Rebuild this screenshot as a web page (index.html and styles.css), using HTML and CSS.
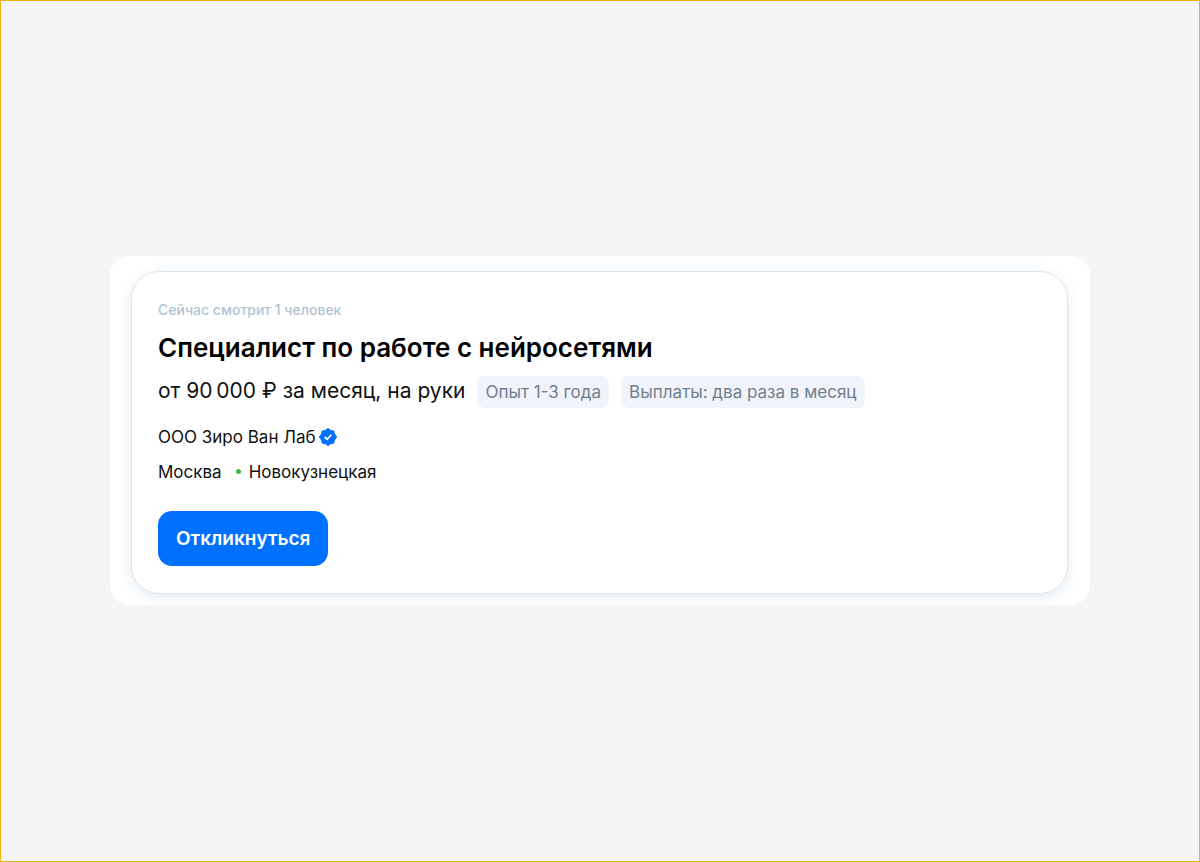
FILE: index.html
```html
<!DOCTYPE html>
<html lang="ru">
<head>
    <meta charset="UTF-8">
    <meta name="viewport" content="width=device-width, initial-scale=1.0">
    <title>Специалист по работе с нейросетями</title>
    <link rel="stylesheet" href="styles.css">
</head>
<body>
    <main class="panel">
        <article class="vacancy">
            <p class="viewers">Сейчас смотрит 1 человек</p>
            <h2 class="title">Специалист по работе с нейросетями</h2>

            <div class="conditions">
                <span class="salary">от 90&#8239;000 ₽ за месяц, на руки</span>
                <span class="tag">Опыт 1-3 года</span>
                <span class="tag">Выплаты: два раза в месяц</span>
            </div>

            <div class="company">
                <span>ООО Зиро Ван Лаб</span>
                <svg class="verified" viewBox="0 0 20 20" aria-hidden="true">
                    <path d="M10 1 12.4 3.1 16 3.6 16.8 7.1 19 10 16.8 12.9 16 16.4 12.4 16.9 10 19 7.6 16.9 4 16.4 3.2 12.9 1 10 3.2 7.1 4 3.6 7.6 3.1Z" fill="#0070ff" stroke="#0070ff" stroke-width="2" stroke-linejoin="round"/>
                    <path d="M6.3 10 9 12.5 13.8 7.5" fill="none" stroke="#fff" stroke-width="2"/>
                </svg>
            </div>

            <div class="address">
                <span>Москва</span>
                <span class="metro">Новокузнецкая</span>
            </div>

            <button class="respond" type="button">Откликнуться</button>
        </article>
    </main>
</body>
</html>
```
FILE: styles.css
```css
* {
    margin: 0;
    padding: 0;
    box-sizing: border-box;
}

body {
    display: flex;
    justify-content: center;
    align-items: center;
    min-height: 100vh;
    padding: 0 109px 2px;
    border: 1px solid #eab615;
    background-color: #f5f5f5;
    font-family: "Inter", "Roboto", sans-serif;
    color: #111;
}

.panel {
    width: 100%;
    padding: 15px 22px 11px 21px;
    border-radius: 20px;
    background: #fff;
    overflow: hidden;
}

.vacancy {
    padding: 28px 26px 27px;
    border: 1px solid #dce4ed;
    border-radius: 28px;
    background: #fff;
    box-shadow: 0 3px 14px rgba(112, 144, 176, 0.18);
}

.viewers {
    font-size: 14px;
    line-height: 20px;
    font-weight: 500;
    color: #b2c3d4;
}

.title {
    margin-top: 10px;
    font-size: 26px;
    line-height: 36px;
    font-weight: 600;
    color: #000;
}

.conditions {
    display: flex;
    flex-wrap: wrap;
    align-items: flex-start;
    gap: 12px;
    margin-top: 10px;
}

.salary {
    font-size: 21px;
    line-height: 30px;
}

.tag {
    padding: 4px 8px;
    border-radius: 8px;
    background: #f0f3f9;
    font-size: 17px;
    line-height: 24px;
    color: #71808d;
}

.company,
.address {
    display: flex;
    align-items: center;
    font-size: 17px;
    line-height: 24px;
}

.company {
    gap: 3px;
    margin-top: 17px;
}

.verified {
    width: 18px;
    height: 18px;
}

.address {
    gap: 14px;
    margin-top: 11px;
}

.metro {
    display: flex;
    align-items: center;
    gap: 8px;
}

/* Линия метро */
.metro::before {
    content: "";
    width: 5px;
    height: 5px;
    border-radius: 50%;
    background: #43b54e;
}

.respond {
    margin-top: 27px;
    padding: 14px 18px;
    border: none;
    border-radius: 14px;
    background: #0070ff;
    font-family: inherit;
    font-size: 19px;
    line-height: 27px;
    font-weight: 600;
    color: #fff;
    cursor: pointer;
}
```
